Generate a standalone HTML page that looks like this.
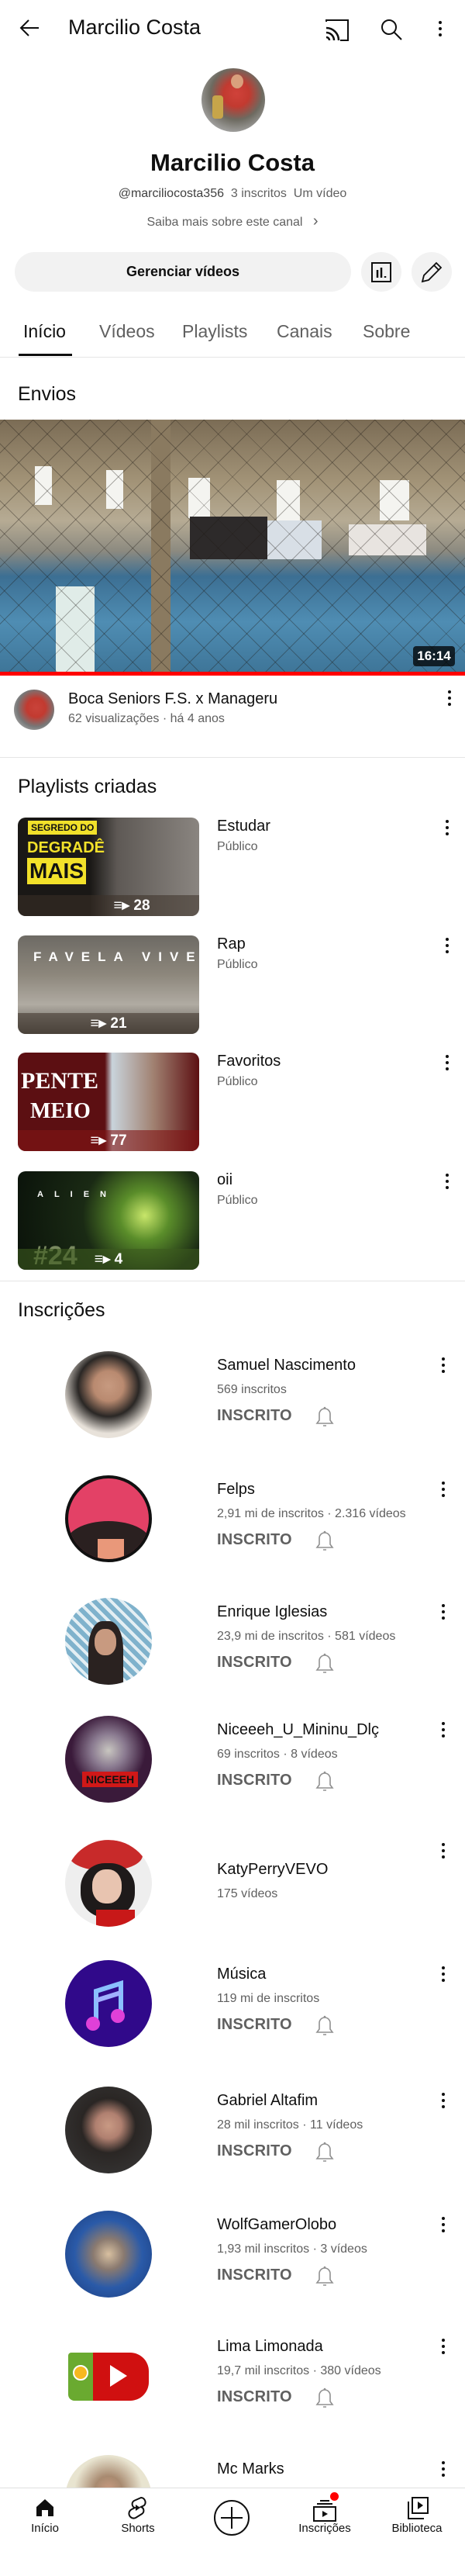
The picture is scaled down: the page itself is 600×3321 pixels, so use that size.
<!DOCTYPE html>
<html><head><meta charset="utf-8">
<style>
*{margin:0;padding:0;box-sizing:border-box}
body{width:600px;height:3291px;position:relative;background:#fff;font-family:"Liberation Sans",sans-serif;color:#0f0f0f;overflow:hidden}
.a{position:absolute}
.dots{position:absolute;width:4px}
.dots i{display:block;width:4px;height:4px;border-radius:50%;background:#0f0f0f;margin-bottom:4px}
.sec{position:absolute;left:23px;font-size:25px;color:#0f0f0f}
.thumb{position:absolute;left:23px;width:234px;height:127px;border-radius:10px;overflow:hidden}
.thumb .bar{position:absolute;left:0;right:0;bottom:0;height:27px;background:rgba(60,50,40,.55);color:#fff;font-size:19px;font-weight:bold;text-align:center;line-height:27px}
.pt{position:absolute;left:280px;font-size:20px}
.pp{position:absolute;left:280px;font-size:16px;color:#606060}
.row{position:absolute;left:0;width:600px;height:150px}
.av{position:absolute;left:84px;width:112px;height:112px;border-radius:50%;top:-6px;overflow:hidden}
.nm{position:absolute;left:280px;top:0;font-size:20px;line-height:24px}
.sb{position:absolute;left:280px;top:34px;font-size:16px;line-height:20px;color:#606060}
.ins{position:absolute;left:280px;top:65px;font-size:20px;line-height:24px;color:#606060;font-weight:bold;letter-spacing:.2px}
.bell{position:absolute;left:405px;top:63px}
.rd{position:absolute;left:570px;top:2px}
.nav{position:absolute;top:3207px;left:0;width:600px;height:84px;background:#fff;border-top:1px solid #e0e0e0}
.nl{position:absolute;top:43px;font-size:15px;text-align:center;width:120px}
.tab{position:absolute;top:412px;font-size:23px;line-height:30px;color:#606060}
</style></head><body>

<svg class="a" style="left:24px;top:22px" width="28" height="28" viewBox="0 0 28 28"><path d="M26 14H3M13 4L3 14l10 10" fill="none" stroke="#0f0f0f" stroke-width="2"/></svg>
<div class="a" style="left:88px;top:18px;font-size:27px;line-height:34px">Marcilio Costa</div>
<svg class="a" style="left:419px;top:24px" width="32" height="30" viewBox="0 0 32 30"><path d="M2 4V2h28v26H20" fill="none" stroke="#0f0f0f" stroke-width="2"/><path d="M2 12a16 16 0 0 1 16 16M2 18a10 10 0 0 1 10 10M2 24a4 4 0 0 1 4 4" fill="none" stroke="#0f0f0f" stroke-width="2.5"/></svg>
<svg class="a" style="left:490px;top:23px" width="30" height="30" viewBox="0 0 30 30"><circle cx="12" cy="12" r="9" fill="none" stroke="#0f0f0f" stroke-width="2"/><path d="M19 19l9 9" stroke="#0f0f0f" stroke-width="2"/></svg>
<div class="dots" style="left:566px;top:27px"><i></i><i></i><i></i></div>

<div class="a" style="left:260px;top:88px;width:82px;height:82px;border-radius:50%;background:radial-gradient(circle at 55% 40%,#d0423a 0,#c23a30 25%,#6d6a60 50%,#aaa 80%);overflow:hidden">
<div class="a" style="left:38px;top:8px;width:16px;height:18px;border-radius:50%;background:#d9a07d"></div>
<div class="a" style="left:14px;top:35px;width:14px;height:30px;background:#c7a54a;border-radius:4px"></div></div>
<div class="a" style="left:0;width:600px;top:191px;text-align:center;font-size:31px;font-weight:bold;line-height:38px">Marcilio Costa</div>
<div class="a" style="left:0;width:600px;top:240px;text-align:center;font-size:16px;color:#606060;line-height:20px"><span style="color:#404040">@marciliocosta356</span>&nbsp; 3 inscritos&nbsp; Um vídeo</div>
<div class="a" style="left:0;width:600px;top:275px;text-align:center;font-size:16px;color:#606060;line-height:20px">Saiba mais sobre este canal &nbsp;&nbsp;<span style="font-size:20px">&#x203A;</span></div>

<div class="a" style="left:19px;top:325px;width:434px;height:51px;border-radius:26px;background:#f2f2f2;text-align:center;line-height:51px;font-size:18px;font-weight:bold;color:#0f0f0f">Gerenciar vídeos</div>
<div class="a" style="left:466px;top:325px;width:52px;height:51px;border-radius:50%;background:#f2f2f2"></div>
<svg class="a" style="left:479px;top:338px" width="26" height="26" viewBox="0 0 26 26"><rect x="1" y="1" width="24" height="24" fill="none" stroke="#0f0f0f" stroke-width="2"/><path d="M8 10v10M13 7v13M18 18v2" stroke="#0f0f0f" stroke-width="2.5"/></svg>
<div class="a" style="left:531px;top:325px;width:52px;height:51px;border-radius:50%;background:#f2f2f2"></div>
<svg class="a" style="left:542px;top:336px" width="30" height="30" viewBox="0 0 30 30"><path d="M3 27l2-8L21 3l6 6L11 25z M18 6l6 6" fill="none" stroke="#0f0f0f" stroke-width="1.8"/></svg>

<div class="tab" style="left:30px;color:#0f0f0f">Início</div>
<div class="tab" style="left:128px">Vídeos</div>
<div class="tab" style="left:235px">Playlists</div>
<div class="tab" style="left:357px">Canais</div>
<div class="tab" style="left:468px">Sobre</div>
<div class="a" style="left:24px;top:456px;width:69px;height:3px;background:#0f0f0f"></div>
<div class="a" style="left:0;top:460px;width:600px;height:1px;background:#e5e5e5"></div>

<div class="sec" style="top:494px">Envios</div>

<div class="a" style="left:0;top:541px;width:600px;height:326px;background:linear-gradient(180deg,#7b6c55 0%,#a39478 25%,#b6ab94 40%,#8c8a80 52%,#3c6f93 62%,#4f8db3 80%,#3e7598 100%);overflow:hidden">
<div class="a" style="left:45px;top:60px;width:22px;height:50px;background:#f4f4f0"></div>
<div class="a" style="left:137px;top:65px;width:22px;height:50px;background:#f4f4f0"></div>
<div class="a" style="left:243px;top:75px;width:28px;height:52px;background:#f4f4f0"></div>
<div class="a" style="left:357px;top:78px;width:30px;height:52px;background:#f4f4f0"></div>
<div class="a" style="left:490px;top:78px;width:38px;height:52px;background:#f4f4f0"></div>
<div class="a" style="left:195px;top:0;width:25px;height:326px;background:#8a7a60"></div>
<div class="a" style="left:245px;top:125px;width:100px;height:55px;background:#2d2a2a"></div>
<div class="a" style="left:345px;top:130px;width:70px;height:50px;background:#d8dfe6"></div>
<div class="a" style="left:450px;top:135px;width:100px;height:40px;background:#e8e4e0"></div>
<div class="a" style="left:72px;top:215px;width:50px;height:110px;background:#e0ece8"></div>
<div class="a" style="left:0;top:0;width:600px;height:326px;background:repeating-linear-gradient(45deg,rgba(30,25,20,.35) 0 1px,transparent 1px 26px),repeating-linear-gradient(-45deg,rgba(30,25,20,.35) 0 1px,transparent 1px 26px)"></div>
<div class="a" style="left:533px;top:292px;width:54px;height:26px;border-radius:4px;background:rgba(0,0,0,.75);color:#fff;font-size:17px;font-weight:bold;text-align:center;line-height:26px">16:14</div>
</div>
<div class="a" style="left:0;top:866px;width:600px;height:5px;background:#f00"></div>

<div class="a" style="left:18px;top:889px;width:52px;height:52px;border-radius:50%;background:radial-gradient(circle at 55% 45%,#c9433a 0,#c23a30 30%,#777 60%,#bbb 90%)"></div>
<div class="a" style="left:88px;top:889px;font-size:20px;line-height:24px">Boca Seniors F.S. x Manageru</div>
<div class="a" style="left:88px;top:917px;font-size:16px;line-height:20px;color:#606060">62 visualizações · há 4 anos</div>
<div class="dots" style="left:578px;top:890px"><i></i><i></i><i></i></div>
<div class="a" style="left:0;top:976px;width:600px;height:1px;background:#e5e5e5"></div>

<div class="sec" style="top:1000px">Playlists criadas</div>

<div class="thumb" style="top:1054px;background:linear-gradient(90deg,#1a1816 0%,#1a1816 40%,#5e5955 55%,#8a8580 100%)">
<div class="a" style="left:13px;top:4px;background:#f2e12a;color:#111;font-weight:bold;font-size:12px;padding:2px 4px">SEGREDO DO</div>
<div class="a" style="left:12px;top:28px;color:#f2e12a;font-weight:bold;font-size:20px">DEGRADÊ</div>
<div class="a" style="left:12px;top:52px;background:#f2e12a;color:#111;font-weight:bold;font-size:28px;padding:0 3px;line-height:34px">MAIS</div>
<div class="bar" style="padding-left:60px">≡▸ 28</div></div>
<div class="pt" style="top:1054px">Estudar</div><div class="pp" style="top:1083px">Público</div>
<div class="dots" style="left:575px;top:1057px"><i></i><i></i><i></i></div>

<div class="thumb" style="top:1206px;background:linear-gradient(180deg,#6d6a64 0%,#8d877c 40%,#b0aba2 70%,#5a5650 100%)">
<div class="a" style="left:20px;top:18px;color:#fff;font-weight:bold;font-size:17px;letter-spacing:10px;white-space:nowrap">FAVELA VIVE</div>
<div class="bar">≡▸ 21</div></div>
<div class="pt" style="top:1206px">Rap</div><div class="pp" style="top:1235px">Público</div>
<div class="dots" style="left:575px;top:1209px"><i></i><i></i><i></i></div>

<div class="thumb" style="top:1357px;background:linear-gradient(90deg,#5c0f12 0%,#5c0f12 48%,#c9d4dc 52%,#a08070 75%,#5c0f12 100%)">
<div class="a" style="left:4px;top:20px;color:#fff;font-weight:bold;font-size:30px;font-family:'Liberation Serif',serif">PENTE</div>
<div class="a" style="left:16px;top:60px;color:#fff;font-weight:bold;font-size:28px;font-family:'Liberation Serif',serif">MEIO</div>
<div class="bar" style="background:rgba(130,20,20,.6)">≡▸ 77</div></div>
<div class="pt" style="top:1357px">Favoritos</div><div class="pp" style="top:1386px">Público</div>
<div class="dots" style="left:575px;top:1360px"><i></i><i></i><i></i></div>

<div class="thumb" style="top:1510px;background:radial-gradient(circle at 70% 45%,#c8e66a 0,#5a8d2a 18%,#1a2a14 45%,#0a120a 100%)">
<div class="a" style="left:25px;top:24px;color:#fff;font-weight:bold;font-size:11px;letter-spacing:14px">ALIEN</div>
<div class="a" style="left:20px;top:90px;color:#7a8a60;font-weight:bold;font-size:34px">#24</div>
<div class="bar" style="background:rgba(60,90,30,.6)">≡▸ 4</div></div>
<div class="pt" style="top:1510px">oii</div><div class="pp" style="top:1539px">Público</div>
<div class="dots" style="left:575px;top:1513px"><i></i><i></i><i></i></div>

<div class="a" style="left:0;top:1651px;width:600px;height:1px;background:#e5e5e5"></div>
<div class="sec" style="top:1675px">Inscrições</div>

<div class="row" style="top:1748px"><div class="av" style="background:radial-gradient(circle at 50% 40%,#c79a80 0,#b98a70 22%,#2a2725 45%,#e8e2da 70%)"></div>
<div class="nm">Samuel Nascimento</div><div class="sb">569 inscritos</div><div class="ins">INSCRITO</div>
<svg class="bell" width="28" height="30" viewBox="0 0 28 30"><path d="M4 24h20l-3-4V12a7 7 0 0 0-14 0v8z M12 27h4" fill="none" stroke="#909090" stroke-width="1.6"/><circle cx="14" cy="4" r="1.3" fill="#909090"/></svg>
<div class="dots rd"><i></i><i></i><i></i></div></div>

<div class="row" style="top:1908px"><div class="av" style="background:#e34166;border:4px solid #111"><div class="a" style="left:-4px;top:55px;width:112px;height:60px;border-radius:50% 50% 0 0;background:#2a2020"></div><div class="a" style="left:38px;top:78px;width:34px;height:30px;background:#e9987a"></div></div>
<div class="nm">Felps</div><div class="sb">2,91 mi de inscritos · 2.316 vídeos</div><div class="ins">INSCRITO</div>
<svg class="bell" width="28" height="30" viewBox="0 0 28 30"><path d="M4 24h20l-3-4V12a7 7 0 0 0-14 0v8z M12 27h4" fill="none" stroke="#909090" stroke-width="1.6"/><circle cx="14" cy="4" r="1.3" fill="#909090"/></svg>
<div class="dots rd"><i></i><i></i><i></i></div></div>

<div class="row" style="top:2066px"><div class="av" style="background:repeating-linear-gradient(45deg,#7fb2cc 0 6px,#e3eef3 6px 10px)"><div class="a" style="left:30px;top:30px;width:45px;height:90px;border-radius:40% 40% 0 0;background:#2a2220"></div><div class="a" style="left:38px;top:40px;width:28px;height:34px;border-radius:45%;background:#c89a80"></div></div>
<div class="nm">Enrique Iglesias</div><div class="sb">23,9 mi de inscritos · 581 vídeos</div><div class="ins">INSCRITO</div>
<svg class="bell" width="28" height="30" viewBox="0 0 28 30"><path d="M4 24h20l-3-4V12a7 7 0 0 0-14 0v8z M12 27h4" fill="none" stroke="#909090" stroke-width="1.6"/><circle cx="14" cy="4" r="1.3" fill="#909090"/></svg>
<div class="dots rd"><i></i><i></i><i></i></div></div>

<div class="row" style="top:2218px"><div class="av" style="background:radial-gradient(circle at 50% 40%,#c8c6c0 0,#8a7a90 25%,#3a1a3a 55%)"><div class="a" style="left:22px;top:72px;width:72px;height:20px;background:#d01818;color:#111;font-size:14px;font-weight:bold;text-align:center;line-height:20px">NICEEEH</div></div>
<div class="nm">Niceeeh_U_Mininu_Dlç</div><div class="sb">69 inscritos · 8 vídeos</div><div class="ins">INSCRITO</div>
<svg class="bell" width="28" height="30" viewBox="0 0 28 30"><path d="M4 24h20l-3-4V12a7 7 0 0 0-14 0v8z M12 27h4" fill="none" stroke="#909090" stroke-width="1.6"/><circle cx="14" cy="4" r="1.3" fill="#909090"/></svg>
<div class="dots rd"><i></i><i></i><i></i></div></div>

<div class="row" style="top:2398px"><div class="av" style="top:-26px;background:#eeeeee"><div class="a" style="left:5px;top:0;width:95px;height:40px;border-radius:50%;background:#c82a2a"></div><div class="a" style="left:20px;top:30px;width:70px;height:70px;border-radius:45%;background:#1e1a1a"></div><div class="a" style="left:35px;top:38px;width:38px;height:44px;border-radius:45%;background:#e8c4b0"></div><div class="a" style="left:40px;top:90px;width:50px;height:30px;background:#c81818"></div></div>
<div class="nm">KatyPerryVEVO</div><div class="sb">175 vídeos</div>
<div class="dots rd" style="top:-22px"><i></i><i></i><i></i></div></div>

<div class="row" style="top:2533px"><div class="av" style="background:#30098a">
<svg class="a" style="left:26px;top:22px" width="60" height="70" viewBox="0 0 60 70"><path d="M14 58V18L46 8v40" fill="none" stroke="#8ac0ff" stroke-width="6"/><path d="M14 30L46 20" stroke="#a0b0ff" stroke-width="6"/><circle cx="10" cy="60" r="9" fill="#e040d8"/><circle cx="42" cy="50" r="9" fill="#e040d8"/></svg></div>
<div class="nm">Música</div><div class="sb">119 mi de inscritos</div><div class="ins">INSCRITO</div>
<svg class="bell" width="28" height="30" viewBox="0 0 28 30"><path d="M4 24h20l-3-4V12a7 7 0 0 0-14 0v8z M12 27h4" fill="none" stroke="#909090" stroke-width="1.6"/><circle cx="14" cy="4" r="1.3" fill="#909090"/></svg>
<div class="dots rd"><i></i><i></i><i></i></div></div>

<div class="row" style="top:2696px"><div class="av" style="background:radial-gradient(circle at 50% 45%,#c99a84 0,#b08070 20%,#2a2624 42%,#3a3a3a 100%)"></div>
<div class="nm">Gabriel Altafim</div><div class="sb">28 mil inscritos · 11 vídeos</div><div class="ins">INSCRITO</div>
<svg class="bell" width="28" height="30" viewBox="0 0 28 30"><path d="M4 24h20l-3-4V12a7 7 0 0 0-14 0v8z M12 27h4" fill="none" stroke="#909090" stroke-width="1.6"/><circle cx="14" cy="4" r="1.3" fill="#909090"/></svg>
<div class="dots rd"><i></i><i></i><i></i></div></div>

<div class="row" style="top:2856px"><div class="av" style="background:radial-gradient(circle at 50% 50%,#d8c0a0 0,#8a7a70 25%,#2a5aa8 55%,#1a3a7a 100%)"></div>
<div class="nm">WolfGamerOlobo</div><div class="sb">1,93 mil inscritos · 3 vídeos</div><div class="ins">INSCRITO</div>
<svg class="bell" width="28" height="30" viewBox="0 0 28 30"><path d="M4 24h20l-3-4V12a7 7 0 0 0-14 0v8z M12 27h4" fill="none" stroke="#909090" stroke-width="1.6"/><circle cx="14" cy="4" r="1.3" fill="#909090"/></svg>
<div class="dots rd"><i></i><i></i><i></i></div></div>

<div class="row" style="top:3013px"><div class="av" style="background:#fff;border-radius:0">
<div class="a" style="left:4px;top:26px;width:34px;height:62px;background:#6aaa30;border-radius:4px 0 0 8px"></div>
<div class="a" style="left:36px;top:26px;width:72px;height:62px;background:#d01010;border-radius:0 24px 24px 0"></div>
<div class="a" style="left:10px;top:42px;width:20px;height:20px;border-radius:50%;background:#f6b820;border:2px solid #fff"></div>
<svg class="a" style="left:58px;top:42px" width="24" height="28"><path d="M0 0L22 14L0 28z" fill="#fff"/></svg></div>
<div class="nm">Lima Limonada</div><div class="sb">19,7 mil inscritos · 380 vídeos</div><div class="ins">INSCRITO</div>
<svg class="bell" width="28" height="30" viewBox="0 0 28 30"><path d="M4 24h20l-3-4V12a7 7 0 0 0-14 0v8z M12 27h4" fill="none" stroke="#909090" stroke-width="1.6"/><circle cx="14" cy="4" r="1.3" fill="#909090"/></svg>
<div class="dots rd"><i></i><i></i><i></i></div></div>

<div class="row" style="top:3171px"><div class="av" style="background:radial-gradient(circle at 50% 40%,#c89a80 0,#a88a70 20%,#e8e4d0 50%)"></div>
<div class="nm">Mc Marks</div><div class="sb">2,69 mil de inscritos · 115 vídeos</div>
<div class="dots rd"><i></i><i></i><i></i></div></div>

<div class="nav">
<svg class="a" style="left:45px;top:12px" width="26" height="26" viewBox="0 0 26 26"><path d="M2 12L13 2l11 10v12h-7v-8H9v8H2z" fill="#0f0f0f"/></svg>
<div class="nl" style="left:-2px">Início</div>
<svg class="a" style="left:165px;top:9px" width="26" height="32" viewBox="0 0 26 32"><path d="M17 3a6 6 0 0 1 4 10l-4 2a5 5 0 0 1 1 9l-8 5a6 6 0 0 1-5-11l4-2a5 5 0 0 1-1-9z" fill="none" stroke="#0f0f0f" stroke-width="2"/><path d="M10 12l6 4-6 4z" fill="#0f0f0f"/></svg>
<div class="nl" style="left:118px">Shorts</div>
<svg class="a" style="left:275px;top:14px" width="48" height="48" viewBox="0 0 48 48"><circle cx="24" cy="24" r="22" fill="none" stroke="#0f0f0f" stroke-width="2"/><path d="M24 10v28M10 24h28" stroke="#0f0f0f" stroke-width="2"/></svg>
<svg class="a" style="left:403px;top:10px" width="34" height="34" viewBox="0 0 34 34"><rect x="2" y="14" width="28" height="18" fill="none" stroke="#0f0f0f" stroke-width="2"/><path d="M6 10h20M10 6h12" stroke="#0f0f0f" stroke-width="2"/><path d="M13 19l7 4-7 4z" fill="#0f0f0f"/></svg>
<div class="a" style="left:426px;top:5px;width:11px;height:11px;border-radius:50%;background:#f00"></div>
<div class="nl" style="left:359px">Inscrições</div>
<svg class="a" style="left:524px;top:10px" width="30" height="32" viewBox="0 0 30 32"><rect x="8" y="2" width="20" height="20" fill="none" stroke="#0f0f0f" stroke-width="2"/><path d="M3 7v22h20" fill="none" stroke="#0f0f0f" stroke-width="2"/><path d="M15 7l7 5-7 5z" fill="#0f0f0f"/></svg>
<div class="nl" style="left:478px">Biblioteca</div>
</div>
</body></html>
